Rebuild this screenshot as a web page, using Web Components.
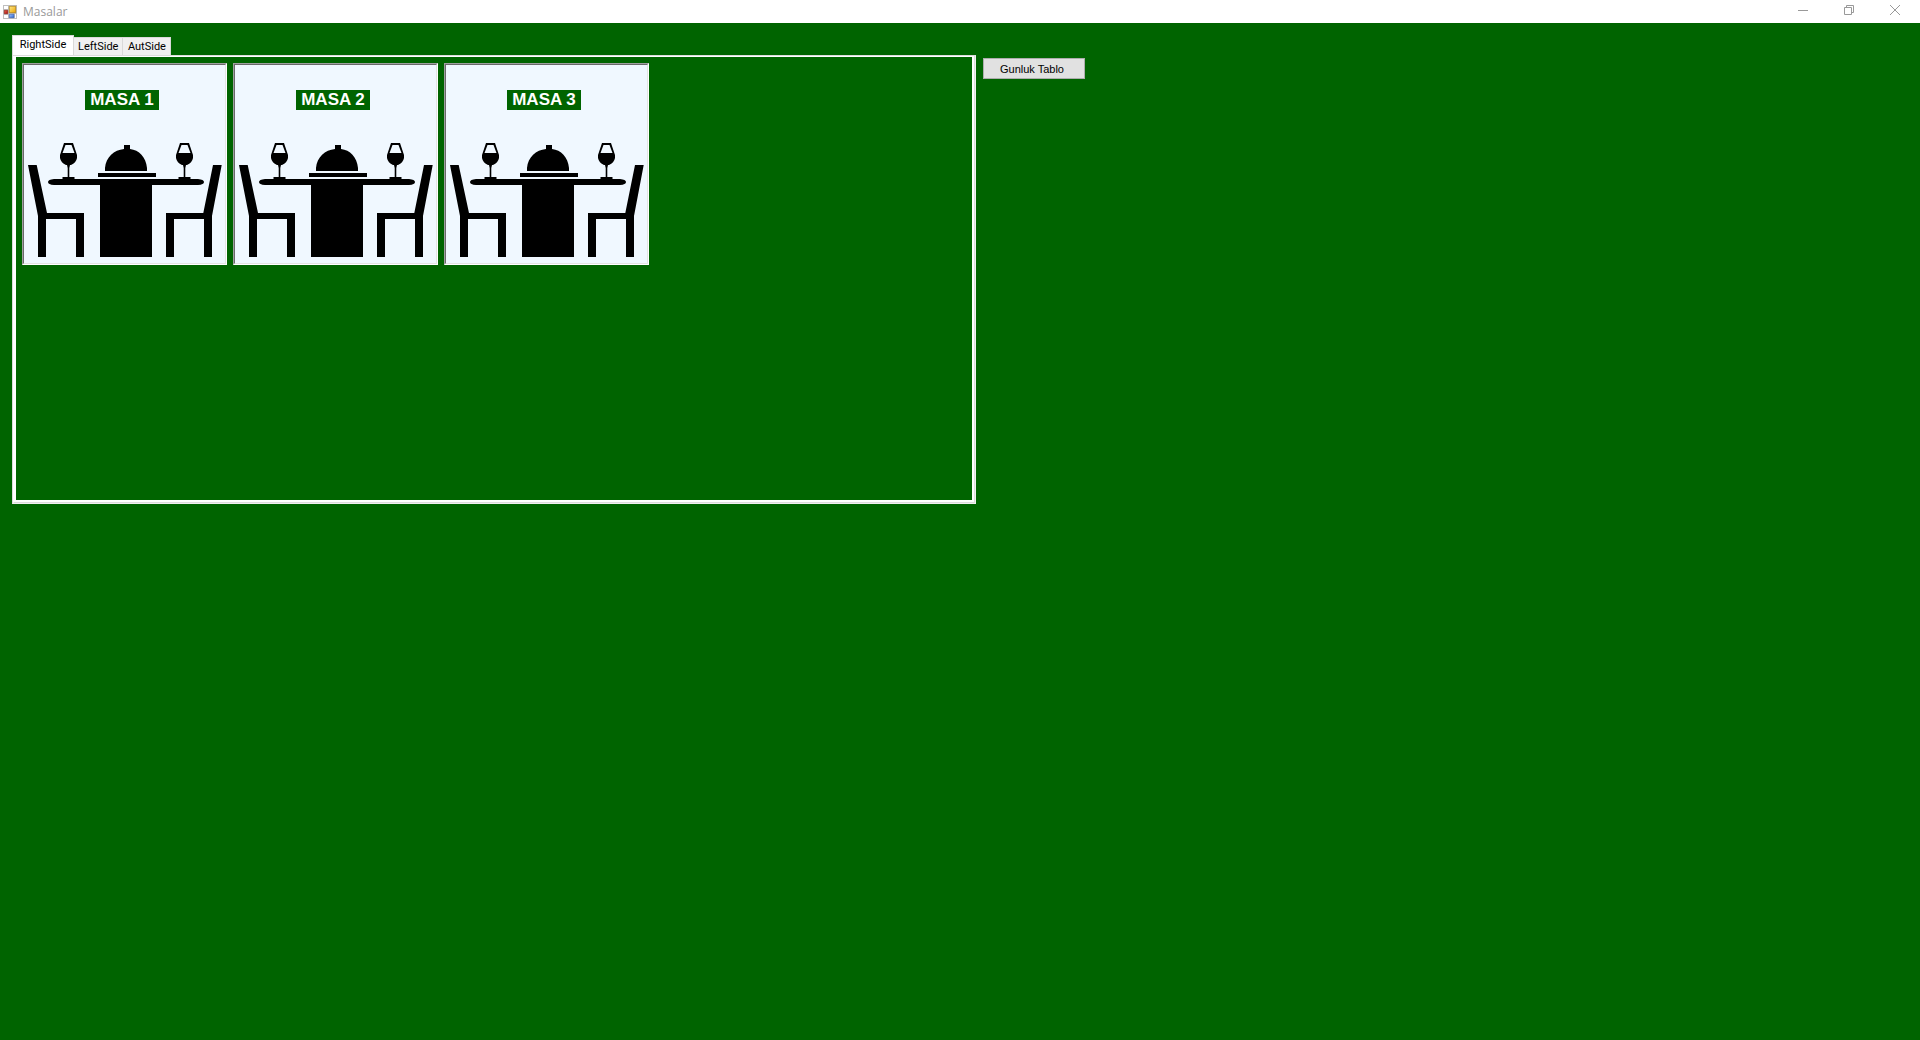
<!DOCTYPE html>
<html lang="tr">
<head>
<meta charset="utf-8">
<title>Masalar</title>
<style>
  html, body { height: 100%; margin: 0; }
  body { background: #006400; font: 11px/14px Roboto, "Liberation Sans", Arial, sans-serif; color: #000; }
</style>
</head>
<body>
<app-window caption="Masalar">
  <tab-control>
    <tab-page label="RightSide">
      <masa-card>MASA 1</masa-card>
      <masa-card>MASA 2</masa-card>
      <masa-card>MASA 3</masa-card>
    </tab-page>
    <tab-page label="LeftSide"></tab-page>
    <tab-page label="AutSide"></tab-page>
  </tab-control>
  <form-button>Gunluk Tablo</form-button>
</app-window>

<template id="window-template">
  <style>
    :host { display: flex; flex-direction: column; min-height: 100%; }
    header { display: flex; align-items: center; height: 23px; background: #fff; padding: 0 2px 0 3px; box-sizing: border-box; }
    header svg { display: block; }
    h1 { flex: 1; margin: 0 0 0 6px; font: 12px/18px "Open Sans", sans-serif; color: #999; }
    nav { display: flex; align-self: flex-start; }
    nav button { width: 46px; height: 20px; padding: 0; border: 0; background: none; display: flex; align-items: center; justify-content: center; }
    main { flex: 1; display: flex; align-items: flex-start; gap: 7px; padding: 12px; }
  </style>
  <header>
    <svg width="14" height="14" viewBox="0 0 14 14" aria-hidden="true">
      <defs>
        <linearGradient id="y" x2="1" y2="1"><stop stop-color="#ffe98a"/><stop offset="1" stop-color="#eaa400"/></linearGradient>
        <linearGradient id="b" x2="1" y2="1"><stop stop-color="#9cc4ff"/><stop offset="1" stop-color="#2e62cc"/></linearGradient>
        <linearGradient id="r" x2="1" y2="1"><stop stop-color="#ee6a50"/><stop offset="1" stop-color="#a80c0c"/></linearGradient>
      </defs>
      <path fill="#bfbfbf" d="M0 0h14v14H0z"/>
      <path fill="#fff" d="M1 1h4v3H1zM1 10h4v3H1zM12 9h1v4h-1z"/>
      <path fill="url(#r)" stroke="#8e1a12" stroke-width=".6" d="M1.3 5.3h3.4v3.4H1.3z"/>
      <path fill="url(#y)" stroke="#a87600" stroke-width=".6" d="M6.3 1.3h6.4v6.4H6.3z"/>
      <path fill="url(#b)" stroke="#3a62ae" stroke-width=".6" d="M6.3 9.3h4.7v3.4H6.3z"/>
    </svg>
    <h1></h1>
    <nav>
      <button aria-label="Minimize"><svg width="10" height="10"><path stroke="#999" d="M0 5.5h10"/></svg></button>
      <button aria-label="Restore"><svg width="10" height="10"><path fill="none" stroke="#999" d="M.5 2.5h7v7h-7zM2.5 2.5v-2h7v7h-2"/></svg></button>
      <button aria-label="Close"><svg width="10" height="10"><path stroke="#999" d="M0 0l10 10M10 0L0 10"/></svg></button>
    </nav>
  </header>
  <main><slot></slot></main>
</template>

<template id="tabs-template">
  <style>
    :host { display: block; flex: 0 1 964px; min-width: 0; }
    [role=tablist] { display: flex; align-items: flex-end; height: 20px; }
    button { font: inherit; color: inherit; box-sizing: border-box; min-width: 48px; height: 18px; margin: 0; padding: 1px 4px 0; border: 1px solid #d9d9d9; border-width: 1px 1px 0 0; background: #f0f0f0; white-space: nowrap; }
    button[aria-selected=true] { min-width: 62px; height: 20px; padding: 0 4px 1px; background: #fff; border-width: 1px 1px 0 1px; }
    .frame { border: 1px solid; border-color: #dcdcdc #f0f0f0 #f0f0f0 #dcdcdc; }
    .inner { border: 1px solid; border-color: #fff #dcdcdc #dcdcdc #fff; border-top: 0; }
    .page { border: 2px solid #fff; border-top-width: 1px; background: #006400; }
  </style>
  <div role="tablist"></div>
  <div class="frame"><div class="inner"><div class="page"><slot></slot></div></div></div>
</template>

<template id="page-template">
  <style>
    :host { display: flex; flex-wrap: wrap; align-content: flex-start; gap: 6px; min-height: 431px; padding: 6px; }
    :host([hidden]) { display: none; }
  </style>
  <slot></slot>
</template>

<template id="masa-template">
  <style>
    :host { display: block; border: 1px solid; border-color: #a0a0a0 #fff #fff #a0a0a0; }
    article { display: grid; justify-items: center; border: 1px solid; border-color: #696969 #e3e3e3 #e3e3e3 #696969; background: #f0f8ff; }
    h2 { grid-area: 1 / 1; align-self: start; margin: 25px 5px 0 0; padding: 0 5px; background: #006400; color: #fff; font: bold 17px/20px "Liberation Sans", Arial, sans-serif; }
    svg { grid-area: 1 / 1; display: block; }
  </style>
  <article>
    <svg width="201" height="198" viewBox="0 0 201 198" aria-hidden="true">
      <defs>
        <g id="glass">
          <path d="M40 78H49L53 90V93Q52 98 47 100H46L45.3 103V112H50.5V114H38.5V112H43.7V103L43 100H42Q37 98 36 93V90Z"/>
          <path fill="#f0f8ff" d="M41.5 80H47.5L50.5 88H38.5Z"/>
        </g>
      </defs>
      <path d="M4 100H12.7L23 148H60V192H52V154H22V192H14V151Z"/>
      <path d="M197.7 100H189L179.3 148H142V192H150V154H180V192H188V151Z"/>
      <path d="M30 114H174Q180 114.500 180 117T174 120H128V192H76V120H30Q24 119.500 24 117T30 114Z"/>
      <path d="M74 108H132V112H74ZM81 106V103C82 92 90 85 100 84V80H106V84C115 85 122 92 123 103V106Z"/>
      <use href="#glass"/>
      <use href="#glass" x="116"/>
    </svg>
    <h2><slot></slot></h2>
  </article>
</template>

<template id="button-template">
  <style>
    :host { display: block; margin-top: 23px; }
    button { display: block; box-sizing: border-box; width: 102px; height: 21px; padding: 0 4px 0 0; border: 1px solid #adadad; background: #e1e1e1; color: #000; font: 11px/14px "Liberation Sans", Arial, sans-serif; }
  </style>
  <button><slot></slot></button>
</template>

<script>
  class Base extends HTMLElement {
    constructor(id) {
      super();
      this.attachShadow({ mode: "open" }).append(document.getElementById(id).content.cloneNode(true));
    }
  }
  customElements.define("app-window", class extends Base {
    constructor() { super("window-template"); }
    connectedCallback() { this.shadowRoot.querySelector("h1").textContent = this.getAttribute("caption"); }
  });
  customElements.define("tab-page", class extends Base {
    constructor() { super("page-template"); }
  });
  customElements.define("tab-control", class extends Base {
    constructor() { super("tabs-template"); }
    connectedCallback() {
      const list = this.shadowRoot.querySelector("[role=tablist]");
      const pages = [...this.querySelectorAll("tab-page")];
      const tabs = pages.map((page, i) => {
        const tab = document.createElement("button");
        tab.setAttribute("role", "tab");
        tab.textContent = page.getAttribute("label");
        tab.onclick = () => select(i);
        return tab;
      });
      const select = n => pages.forEach((page, i) => {
        page.hidden = i !== n;
        tabs[i].setAttribute("aria-selected", i === n);
      });
      list.replaceChildren(...tabs);
      select(0);
    }
  });
  customElements.define("masa-card", class extends Base {
    constructor() { super("masa-template"); }
  });
  customElements.define("form-button", class extends Base {
    constructor() { super("button-template"); }
  });
</script>
</body>
</html>
